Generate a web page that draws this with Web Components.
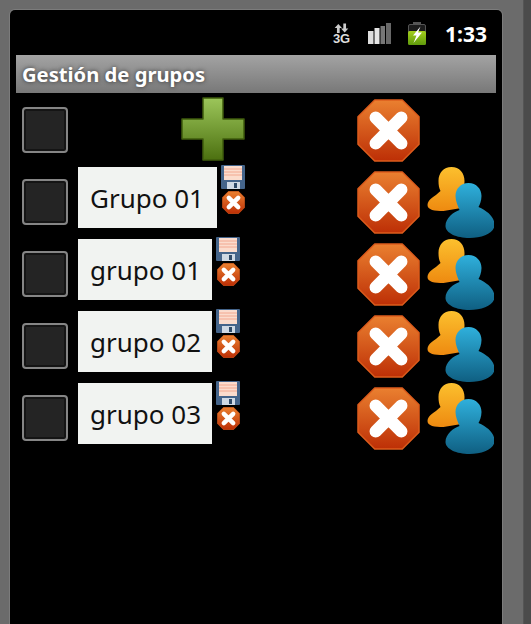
<!DOCTYPE html>
<html>
<head>
<meta charset="utf-8">
<style>
  html, body { margin: 0; padding: 0; background: #6b6b6b; }
</style>
</head>
<body>
<phone-frame>
  <status-bar></status-bar>
  <title-bar>Gestión de grupos</title-bar>
  <group-row no-users><plus-icon></plus-icon></group-row>
  <group-row><text-field wide>Grupo 01</text-field><mini-actions></mini-actions></group-row>
  <group-row><text-field>grupo 01</text-field><mini-actions></mini-actions></group-row>
  <group-row><text-field>grupo 02</text-field><mini-actions></mini-actions></group-row>
  <group-row><text-field>grupo 03</text-field><mini-actions></mini-actions></group-row>
</phone-frame>

<script>
// little helper, every element here is just a template in a shadow root
function define(name, html) {
  const template = document.createElement('template')
  template.innerHTML = html
  customElements.define(name, class extends HTMLElement {
    constructor() {
      super()
      this.attachShadow({mode: 'open'})
      this.shadowRoot.appendChild(template.content.cloneNode(true))
    }
  })
}

const xIcon = (size, cls) => `
  <svg class="${cls}" width="${size}" height="${size}" viewBox="0 0 64 64" style="display:block;filter:blur(.35px)">
    <defs>
      <linearGradient id="oct" x1="0" y1="0" x2="0" y2="1">
        <stop offset="0" stop-color="#ea8030"/>
        <stop offset="1" stop-color="#bd2f06"/>
      </linearGradient>
    </defs>
    <polygon points="18,1 46,1 63,18 63,46 46,63 18,63 1,46 1,18" fill="url(#oct)" stroke="#dd5c1c" stroke-width="1.5" stroke-linejoin="round"/>
    <path d="M19 19L45 45M45 19L19 45" stroke="#fff" stroke-width="12.5" stroke-linecap="round"/>
  </svg>`

define('phone-frame', `
  <style>
    :host { display: block; position: relative; width: 531px; height: 624px; overflow: hidden; background: #6b6b6b; font-family: "Noto Sans", "Open Sans", sans-serif; }
    .body { box-sizing: border-box; width: 524px; height: 624px; padding: 10px 21px 0 10px; border-right: 1px solid #555; }
    .screen { height: 614px; background: #000; border-radius: 5px 5px 0 0; box-shadow: 0 0 0 1px #7c7c7c; }
    .strip { position: absolute; top: 0; left: 524px; width: 7px; height: 624px; background: #4b4b4b; }
  </style>
  <div class="body"><div class="screen"><slot></slot></div></div>
  <div class="strip"></div>
`)

define('status-bar', `
  <style>
    :host { display: flex; align-items: center; justify-content: flex-end; box-sizing: border-box; height: 45px; padding: 2px 15px 0 0; color: #fff; }
    .net { display: flex; flex-direction: column; align-items: center; width: 17px; margin: 0 18px 0 0; color: #ddd; }
    .net b { font: bold 13px/11px "Liberation Sans", sans-serif; letter-spacing: 0; }
    svg { display: block; }
    .sig { margin-right: 17px; }
    .time { font: bold 21px/24px "Noto Sans", sans-serif; margin-left: 19px; }
  </style>
  <div class="net">
    <svg width="17" height="10" viewBox="0 0 17 11">
      <path d="M5 1L9 5.5H6.5V11H3.5V5.5H1Z M12 10.5L8 6H10.5V0.5H13.5V6H16Z" fill="#ccc"/>
    </svg>
    <b>3G</b>
  </div>
  <svg class="sig" width="23" height="21" viewBox="0 0 23 21">
    <rect x="0" y="8" width="5.5" height="13" fill="#dedede"/>
    <rect x="6.5" y="5" width="5" height="16" fill="#e6e6e6"/>
    <rect x="12.5" y="3" width="4.5" height="18" fill="#777"/>
    <rect x="18" y="0" width="5" height="21" fill="#686868"/>
  </svg>
  <svg width="18" height="23" viewBox="0 0 18 23">
    <defs>
      <linearGradient id="bat" x1="0" y1="0" x2="0" y2="1">
        <stop offset="0" stop-color="#a4cf1c"/>
        <stop offset="1" stop-color="#5f9a0c"/>
      </linearGradient>
    </defs>
    <rect x="5" y="0" width="8" height="3" fill="#555"/>
    <rect x="0.5" y="2.5" width="17" height="20" rx="1.5" fill="#1c1c1c" stroke="#555"/>
    <rect x="0" y="9" width="18" height="14" rx="1.5" fill="url(#bat)"/>
    <path d="M12.5 4.5L5 13.5H8.5L5.5 21L14 10.5H10Z" fill="#fff"/>
  </svg>
  <span class="time">1:33</span>
`)

define('title-bar', `
  <style>
    :host { display: flex; align-items: center; box-sizing: border-box; width: 480px; height: 38px; margin-left: 6px; padding-left: 6px;
      background: linear-gradient(#a3a3a3, #787878); color: #fff; font: bold 20.2px "Noto Sans", "Open Sans", sans-serif; text-shadow: 0 0 4px #333; }
  </style>
  <slot></slot>
`)

define('group-row', `
  <style>
    :host { display: grid; grid-template-columns: 46px 268px 64px 66px; column-gap: 10px; align-items: center; height: 72px; padding-left: 12px; }
    :host(:first-of-type) { margin-top: 1px; }
    .check { box-sizing: border-box; width: 46px; height: 46px; border: 2px solid #858585; border-radius: 4px; background: #242424; box-shadow: inset 0 0 0 2px #141414; }
    .mid { display: flex; align-items: flex-start; align-self: start; }
    .big { margin: 1px 0 0 1px; }
    .users { margin-left: -3px; filter: blur(.35px); }
    svg { display: block; }
    :host([no-users]) .users { visibility: hidden; }
  </style>
  <div class="check"></div>
  <div class="mid"><slot></slot></div>
  ${xIcon(63, 'big')}
  <svg class="users" width="67" height="71" viewBox="0 0 66 71">
    <defs>
      <linearGradient id="org" x1="0" y1="0" x2="0" y2="1">
        <stop offset="0" stop-color="#fcc02e"/>
        <stop offset="1" stop-color="#ee8a10"/>
      </linearGradient>
      <linearGradient id="blu" x1="0" y1="0" x2="0" y2="1">
        <stop offset="0" stop-color="#2fb0dc"/>
        <stop offset="1" stop-color="#0f5f82"/>
      </linearGradient>
    </defs>
    <path d="M24 0C32 0 37 6 37 14C37 20 36 24 34 28L40 40L16 44C7 44 0 43 0 38C0 32 7 30 13 24C11.500 21 11 18 11 14C11 6 16 0 24 0Z" fill="url(#org)"/>
    <path d="M41 16C49 16 54 22 54 29C54 34 52 38 51 40C60 44 67 50 67 58C67 66 55 71 42 71C29 71 18 66 18 59C18 51 26 45 32 43C30 38 28 34 28 29C28 22 33 16 41 16Z" fill="url(#blu)"/>
  </svg>
`)

define('text-field', `
  <style>
    :host { display: flex; align-items: center; box-sizing: border-box; width: 134px; height: 61px; margin-top: 1px; padding-left: 12px;
      background: #f1f3f1; color: #111; font: 26px "Noto Sans", "Open Sans", sans-serif; white-space: nowrap; }
    :host([wide]) { width: 139px; }
  </style>
  <slot></slot>
`)

define('mini-actions', `
  <style>
    :host { display: flex; flex-direction: column; align-items: center; row-gap: 2px; width: 24px; margin: -1px 0 0 4px; }
    svg { display: block; filter: blur(.4px); }
  </style>
  <svg width="24" height="24" viewBox="0 0 24 24">
    <rect width="24" height="24" rx="1" fill="#44648a"/>
    <rect x="3" y="1" width="18" height="14" fill="#fbdccd"/>
    <path d="M3 4H21M3 7H21M3 10H21" stroke="#f2a890" stroke-width="1"/>
    <rect x="6" y="17" width="13" height="7" fill="#cfd9e4"/>
    <rect x="13" y="18" width="3" height="5" fill="#2f4a68"/>
  </svg>
  ${xIcon(23, 'small')}
`)

define('plus-icon', `
  <style>
    :host { display: block; margin: 3px 0 0 103px; }
    svg { display: block; filter: blur(.3px); }
  </style>
  <svg width="64" height="64" viewBox="0 0 64 64">
    <defs>
      <linearGradient id="grn" x1="0" y1="0" x2="0" y2="1">
        <stop offset="0" stop-color="#9cc65a"/>
        <stop offset="1" stop-color="#4c7010"/>
      </linearGradient>
    </defs>
    <path d="M22 1H42V22H63V42H42V63H22V42H1V22H22Z" fill="url(#grn)" stroke="#3f5c0c" stroke-width="1.5" stroke-linejoin="round"/>
  </svg>
`)
</script>
</body>
</html>
